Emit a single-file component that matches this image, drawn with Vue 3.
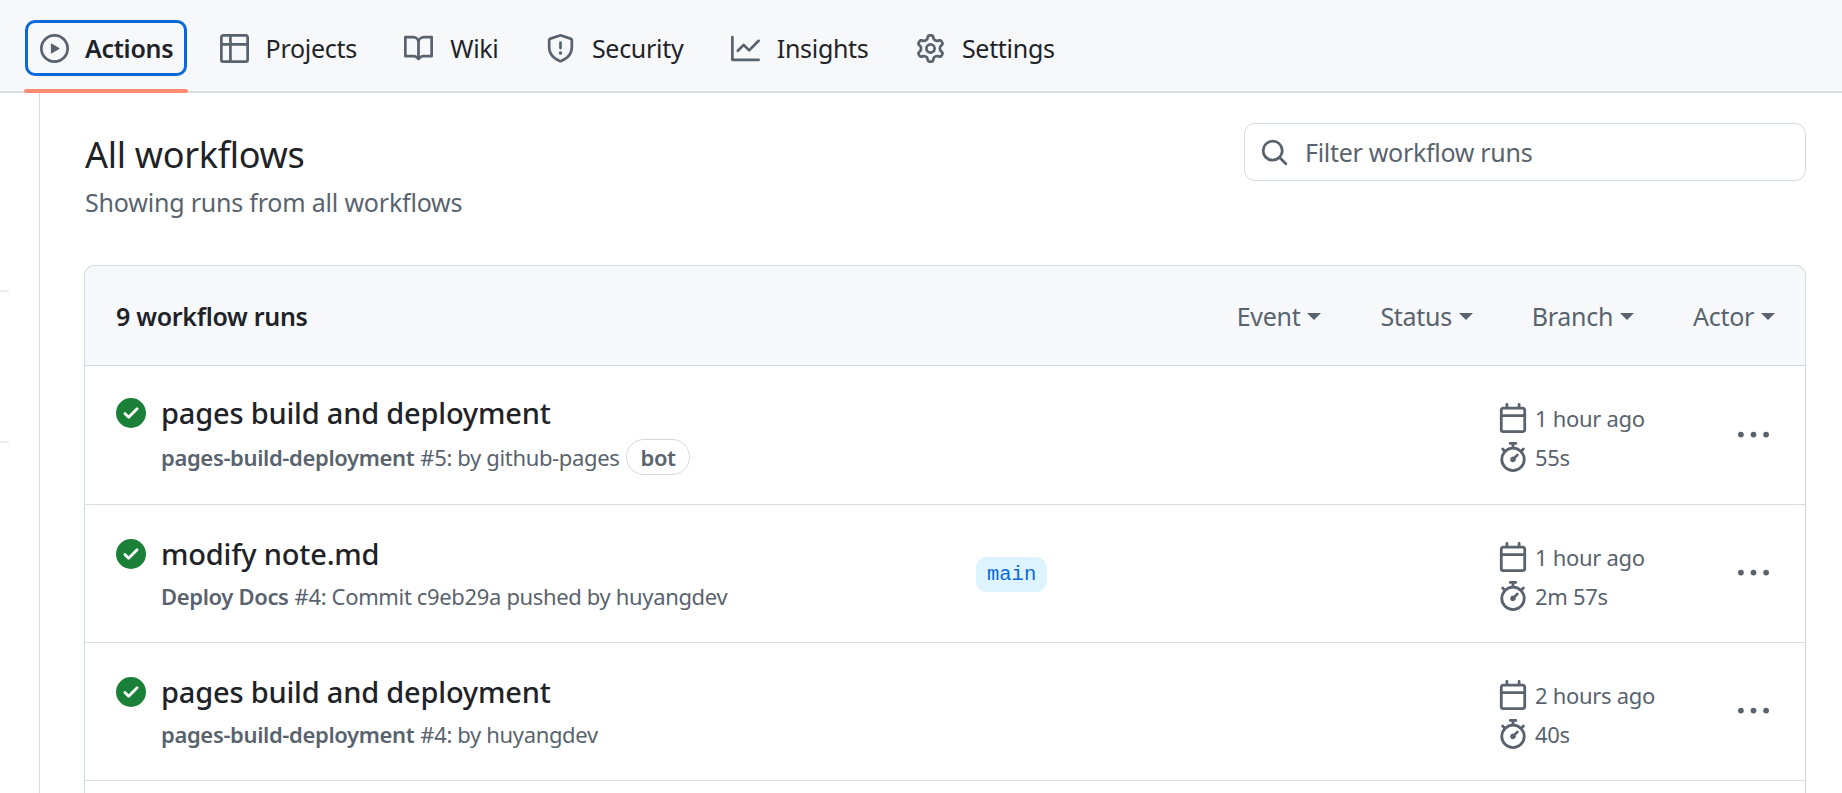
<template>
  <div class="page">
    <nav class="tabs">
      <a
        v-for="tab in tabs"
        :key="tab.label"
        :class="['tab', tab.active ? 'active' : '']"
      >
        <svg class="tab-icon" viewBox="0 0 16 16"><path :d="tab.icon" /></svg>
        <span>{{ tab.label }}</span>
      </a>
    </nav>

    <div class="layout">
      <aside class="sidebar">
        <div class="side-rule"></div>
        <div class="side-rule"></div>
      </aside>

      <main class="content">
        <div class="head">
          <div class="head-text">
            <h2>All workflows</h2>
            <p>Showing runs from all workflows</p>
          </div>
          <div class="filter">
            <svg viewBox="0 0 16 16"><path :d="icons.search" /></svg>
            <span>Filter workflow runs</span>
          </div>
        </div>

        <section class="box">
          <header class="box-header">
            <strong>9 workflow runs</strong>
            <div class="menus">
              <span v-for="menu in menus" :key="menu" class="menu">
                {{ menu }}<i class="caret"></i>
              </span>
            </div>
          </header>

          <div v-for="run in runs" :key="run.meta" class="run">
            <div class="run-left">
              <svg class="status" viewBox="0 0 16 16"><path :d="icons.check" /></svg>
              <div>
                <div class="run-title">{{ run.title }}</div>
                <div class="run-meta">
                  <b>{{ run.workflow }}</b>
                  <span>{{ run.meta }}</span>
                  <span v-if="run.bot" class="bot">bot</span>
                </div>
              </div>
            </div>
            <div class="run-branch">
              <span v-if="run.branch" class="branch">{{ run.branch }}</span>
            </div>
            <div class="run-times">
              <div class="time">
                <svg viewBox="0 0 16 16"><path :d="icons.calendar" /></svg>
                {{ run.when }}
              </div>
              <div class="time">
                <svg viewBox="0 0 16 16"><path :d="icons.stopwatch" /></svg>
                {{ run.took }}
              </div>
            </div>
            <svg class="kebab" viewBox="0 0 16 16"><path :d="icons.kebab" /></svg>
          </div>
          <div class="run empty"></div>
        </section>
      </main>
    </div>
  </div>
</template>

<script setup>
const icons = {
  search: 'M10.68 11.74a6 6 0 0 1-7.922-8.982 6 6 0 0 1 8.982 7.922l3.04 3.04a.749.749 0 0 1-.326 1.275.749.749 0 0 1-.734-.215ZM11.5 7a4.499 4.499 0 1 0-8.997 0A4.499 4.499 0 0 0 11.5 7Z',
  check: 'M8 16A8 8 0 1 1 8 0a8 8 0 0 1 0 16Zm3.78-9.72a.751.751 0 0 0-.018-1.042.751.751 0 0 0-1.042-.018L6.75 9.19 5.28 7.72a.751.751 0 0 0-1.042.018.751.751 0 0 0-.018 1.042l2 2a.75.75 0 0 0 1.06 0Z',
  calendar: 'M4.75 0a.75.75 0 0 1 .75.75V2h5V.75a.75.75 0 0 1 1.5 0V2h1.25c.966 0 1.75.784 1.75 1.75v10.5A1.75 1.75 0 0 1 13.25 16H2.75A1.75 1.75 0 0 1 1 14.25V3.75C1 2.784 1.784 2 2.75 2H4V.75A.75.75 0 0 1 4.75 0ZM2.5 7.5v6.75c0 .138.112.25.25.25h10.5a.25.25 0 0 0 .25-.25V7.5Zm10.75-4H2.75a.25.25 0 0 0-.25.25V6h11V3.75a.25.25 0 0 0-.25-.25Z',
  stopwatch: 'M5.75.75A.75.75 0 0 1 6.5 0h3a.75.75 0 0 1 0 1.5h-.75v1l-.001.041a6.724 6.724 0 0 1 3.464 1.435l.007-.006.75-.75a.75.75 0 1 1 1.06 1.06l-.75.75-.006.007a6.75 6.75 0 1 1-10.548 0L2.72 5.03l-.75-.75a.751.751 0 0 1 .018-1.042.751.751 0 0 1 1.042-.018l.75.75.007.006A6.72 6.72 0 0 1 7.25 2.541V1.5H6.5a.75.75 0 0 1-.75-.75ZM8 14.5a5.25 5.25 0 1 0-.001-10.501A5.25 5.25 0 0 0 8 14.5Zm.389-6.7 1.33-1.33a.75.75 0 1 1 1.061 1.06L9.45 8.861A1.503 1.503 0 0 1 8 10.75a1.499 1.499 0 1 1 .389-2.95Z',
  kebab: 'M8 9a1.5 1.5 0 1 0 0-3 1.5 1.5 0 0 0 0 3ZM1.5 9a1.5 1.5 0 1 0 0-3 1.5 1.5 0 0 0 0 3Zm13 0a1.5 1.5 0 1 0 0-3 1.5 1.5 0 0 0 0 3Z'
}

const tabs = [
  { label: 'Actions', active: true, icon: 'M8 0a8 8 0 1 1 0 16A8 8 0 0 1 8 0ZM1.5 8a6.5 6.5 0 1 0 13 0 6.5 6.5 0 0 0-13 0Zm4.879-2.773 4.264 2.559a.25.25 0 0 1 0 .428l-4.264 2.559A.25.25 0 0 1 6 10.559V5.442a.25.25 0 0 1 .379-.215Z' },
  { label: 'Projects', icon: 'M0 1.75C0 .784.784 0 1.75 0h12.5C15.216 0 16 .784 16 1.75v12.5A1.75 1.75 0 0 1 14.25 16H1.75A1.75 1.75 0 0 1 0 14.25ZM6.5 6.5v8h7.75a.25.25 0 0 0 .25-.25V6.5Zm8-1.5V1.75a.25.25 0 0 0-.25-.25H6.5V5Zm-13 1.5v7.75c0 .138.112.25.25.25H5v-8ZM5 5V1.5H1.75a.25.25 0 0 0-.25.25V5Z' },
  { label: 'Wiki', icon: 'M0 1.75A.75.75 0 0 1 .75 1h4.253c1.227 0 2.317.59 3 1.501A3.743 3.743 0 0 1 11.006 1h4.245a.75.75 0 0 1 .75.75v10.5a.75.75 0 0 1-.75.75h-4.507a2.25 2.25 0 0 0-1.591.659l-.622.621a.75.75 0 0 1-1.06 0l-.622-.621A2.25 2.25 0 0 0 5.258 13H.75a.75.75 0 0 1-.75-.75Zm7.251 10.324.004-5.073-.002-2.253A2.25 2.25 0 0 0 5.003 2.5H1.5v9h3.757a3.75 3.75 0 0 1 1.994.574ZM8.755 4.75l-.004 7.322a3.752 3.752 0 0 1 1.992-.572H14.5v-9h-3.495a2.25 2.25 0 0 0-2.25 2.25Z' },
  { label: 'Security', icon: 'M7.467.133a1.748 1.748 0 0 1 1.066 0l5.25 1.68A1.75 1.75 0 0 1 15 3.48V7c0 1.566-.32 3.182-1.303 4.682-.983 1.498-2.585 2.813-5.032 3.855a1.697 1.697 0 0 1-1.33 0c-2.447-1.042-4.049-2.357-5.032-3.855C1.32 10.182 1 8.566 1 7V3.48a1.75 1.75 0 0 1 1.217-1.667Zm.61 1.429a.25.25 0 0 0-.153 0l-5.25 1.68a.25.25 0 0 0-.174.238V7c0 1.358.275 2.666 1.057 3.86.784 1.194 2.121 2.34 4.366 3.297a.196.196 0 0 0 .154 0c2.245-.956 3.582-2.104 4.366-3.298C13.225 9.666 13.5 8.36 13.5 7V3.48a.25.25 0 0 0-.174-.237l-5.25-1.68ZM8.75 4.75v3a.75.75 0 0 1-1.5 0v-3a.75.75 0 0 1 1.5 0ZM9 10.5a1 1 0 1 1-2 0 1 1 0 0 1 2 0Z' },
  { label: 'Insights', icon: 'M1.5 1.75V13.5h13.75a.75.75 0 0 1 0 1.5H.75a.75.75 0 0 1-.75-.75V1.75a.75.75 0 0 1 1.5 0Zm14.28 2.53-5.25 5.25a.75.75 0 0 1-1.06 0L7 7.06 4.28 9.78a.751.751 0 0 1-1.042-.018.751.751 0 0 1-.018-1.042l3.25-3.25a.75.75 0 0 1 1.06 0L10 7.94l4.72-4.72a.751.751 0 0 1 1.042.018.751.751 0 0 1 .018 1.042Z' },
  { label: 'Settings', icon: 'M8 0a8.2 8.2 0 0 1 .701.031C9.444.095 9.99.645 10.16 1.29l.288 1.107c.018.066.079.158.212.224.231.114.454.243.668.386.123.082.233.09.299.071l1.103-.303c.644-.176 1.392.021 1.82.63.27.385.506.792.704 1.218.315.675.111 1.422-.364 1.891l-.814.806c-.049.048-.098.147-.088.294.016.257.016.515 0 .772-.01.147.038.246.088.294l.814.806c.475.469.679 1.216.364 1.891a7.977 7.977 0 0 1-.704 1.217c-.428.61-1.176.807-1.82.63l-1.102-.302c-.067-.019-.177-.011-.3.071a5.909 5.909 0 0 1-.668.386c-.133.066-.194.158-.211.224l-.29 1.106c-.168.646-.715 1.196-1.458 1.26a8.006 8.006 0 0 1-1.402 0c-.743-.064-1.289-.614-1.458-1.26l-.289-1.106c-.018-.066-.079-.158-.212-.224a5.738 5.738 0 0 1-.668-.386c-.123-.082-.233-.09-.299-.071l-1.103.303c-.644.176-1.392-.021-1.82-.63a8.12 8.12 0 0 1-.704-1.218c-.315-.675-.111-1.422.363-1.891l.815-.806c.05-.048.098-.147.088-.294a6.214 6.214 0 0 1 0-.772c.01-.147-.038-.246-.088-.294l-.815-.806C.635 6.045.431 5.298.746 4.623a7.92 7.92 0 0 1 .704-1.217c.428-.61 1.176-.807 1.82-.63l1.102.302c.067.019.177.011.3-.071.214-.143.437-.272.668-.386.133-.066.194-.158.211-.224l.29-1.106C6.009.645 6.556.095 7.299.03 7.53.01 7.764 0 8 0Zm-.571 1.525c-.036.003-.108.036-.137.146l-.289 1.105c-.147.561-.549.967-.998 1.189-.173.086-.34.183-.5.29-.417.278-.97.423-1.529.27l-1.103-.303c-.109-.03-.175.016-.195.045-.22.312-.412.644-.573.99-.014.031-.021.11.059.19l.815.806c.411.406.562.957.53 1.456a4.709 4.709 0 0 0 0 .582c.032.499-.119 1.05-.53 1.456l-.815.806c-.081.08-.073.159-.059.19.162.346.353.677.573.989.02.03.085.076.195.046l1.102-.303c.56-.153 1.113-.008 1.53.27.161.107.328.204.501.29.447.222.85.629.997 1.189l.289 1.105c.029.109.101.143.137.146a6.6 6.6 0 0 0 1.142 0c.036-.003.108-.036.137-.146l.289-1.105c.147-.561.549-.967.998-1.189.173-.086.34-.183.5-.29.417-.278.97-.423 1.529-.27l1.103.303c.109.029.175-.016.195-.045.22-.313.411-.644.573-.99.014-.031.021-.11-.059-.19l-.815-.806c-.411-.406-.562-.957-.53-1.456a4.709 4.709 0 0 0 0-.582c-.032-.499.119-1.05.53-1.456l.815-.806c.081-.08.073-.159.059-.19a6.464 6.464 0 0 0-.573-.989c-.02-.03-.085-.076-.195-.046l-1.102.303c-.56.153-1.113.008-1.53-.27a4.44 4.44 0 0 0-.501-.29c-.447-.222-.85-.629-.997-1.189l-.289-1.105c-.029-.11-.101-.143-.137-.146a6.6 6.6 0 0 0-1.142 0ZM11 8a3 3 0 1 1-6 0 3 3 0 0 1 6 0ZM9.5 8a1.5 1.5 0 1 0-3.001.001A1.5 1.5 0 0 0 9.5 8Z' }
]

const menus = ['Event', 'Status', 'Branch', 'Actor']

const runs = [
  { title: 'pages build and deployment', workflow: 'pages-build-deployment', meta: '#5: by github-pages', bot: true, when: '1 hour ago', took: '55s' },
  { title: 'modify note.md', workflow: 'Deploy Docs', meta: '#4: Commit c9eb29a pushed by huyangdev', branch: 'main', when: '1 hour ago', took: '2m 57s' },
  { title: 'pages build and deployment', workflow: 'pages-build-deployment', meta: '#4: by huyangdev', when: '2 hours ago', took: '40s' }
]
</script>

<style>
html, body {
  margin: 0;
  background: #fff;
  overflow: hidden;
}
</style>

<style scoped>
.page {
  height: 793px;
  overflow: hidden;
  display: flex;
  flex-direction: column;
  font-family: "Noto Sans", "Liberation Sans", sans-serif;
  color: #1f2328;
  letter-spacing: -0.3px;
}

svg {
  fill: currentColor;
  flex: none;
}

.tabs {
  flex: none;
  height: 71px;
  padding: 20px 0 0 25px;
  display: flex;
  gap: 18.4px;
  background: #f6f8fa;
  border-bottom: 2px solid #d8dee4;
}

.tab {
  position: relative;
  height: 56px;
  box-sizing: border-box;
  padding: 0 15px 0 14px;
  display: flex;
  align-items: center;
  gap: 17px;
  font-size: 25px;
}

.tab-icon {
  width: 29px;
  height: 29px;
  color: #59636e;
}

.tab.active {
  font-weight: 600;
  gap: 16px;
  border: 3px solid #0969da;
  border-radius: 10px;
  padding: 0 11px 0 12px;
}

.tab.active::after {
  content: "";
  position: absolute;
  left: -4px;
  right: -4px;
  bottom: -20px;
  height: 4px;
  border-radius: 2px;
  background: #fd8c73;
}

.layout {
  flex: 1;
  display: flex;
  min-height: 0;
}

.sidebar {
  width: 39px;
  flex: none;
  border-right: 1px solid #d8dee4;
  padding-top: 197px;
}

.side-rule {
  width: 9px;
  height: 2px;
  background: #eaeef2;
  margin-bottom: 149px;
}

.content {
  flex: 1;
  min-width: 0;
  padding: 30px 36px 0 44px;
  display: flex;
  flex-direction: column;
}

.head {
  display: flex;
  justify-content: space-between;
  align-items: flex-start;
  height: 142px;
  flex: none;
}

.head-text {
  padding: 7px 0 0 1px;
}

.head h2 {
  margin: 0;
  font-size: 36px;
  line-height: 50px;
  font-weight: 400;
}

.head p {
  margin: 6px 0 0;
  font-size: 25px;
  line-height: 32px;
  letter-spacing: -0.2px;
  color: #59636e;
}

.filter {
  width: 562px;
  height: 58px;
  box-sizing: border-box;
  border: 1px solid #d1d9e0;
  border-radius: 11px;
  display: flex;
  align-items: center;
  gap: 16px;
  padding-left: 15px;
  font-size: 25px;
  color: #59636e;
}

.filter svg {
  width: 29px;
  height: 29px;
}

.box {
  flex: 1;
  border: 1px solid #d1d9e0;
  border-bottom: none;
  border-radius: 11px 11px 0 0;
  overflow: hidden;
}

.box-header {
  height: 100px;
  box-sizing: border-box;
  background: #f6f8fa;
  border-bottom: 1px solid #d1d9e0;
  display: flex;
  justify-content: space-between;
  align-items: center;
  padding: 0 30px 0 31px;
  font-size: 25px;
}

.box-header strong {
  font-weight: 600;
}

.menus {
  display: flex;
  gap: 59px;
  color: #59636e;
}

.menu {
  display: flex;
  align-items: center;
}

.caret {
  margin-left: 7px;
  margin-top: 2px;
  border-top: 7px solid #59636e;
  border-left: 7px solid transparent;
  border-right: 7px solid transparent;
}

.run {
  height: 138px;
  box-sizing: border-box;
  border-bottom: 1px solid #d8dee4;
  display: flex;
  align-items: center;
  padding-left: 31px;
}

.box-header + .run {
  height: 139px;
}

.run.empty {
  border-bottom: none;
}

.run-left {
  width: 860px;
  flex: none;
  display: flex;
}

.status {
  width: 30px;
  height: 30px;
  color: #1a7f37;
  margin: 3px 15px 0 0;
}

.run-title {
  font-size: 29px;
  line-height: 36px;
  font-weight: 500;
  letter-spacing: -0.2px;
}

.run-meta {
  display: flex;
  align-items: center;
  gap: 6px;
  min-height: 32px;
  margin-top: 8px;
  font-size: 22px;
  line-height: 32px;
  letter-spacing: -0.35px;
  color: #59636e;
}

.run-meta b {
  font-weight: 600;
}

.bot {
  box-sizing: border-box;
  height: 36px;
  line-height: 34px;
  padding: 0 13px;
  margin-left: 1px;
  border: 1px solid #d1d9e0;
  border-radius: 18px;
  font-weight: 600;
}

.run-branch {
  width: 522px;
  flex: none;
  padding-top: 1px;
}

.branch {
  display: block;
  width: max-content;
  height: 35px;
  line-height: 35px;
  padding: 0 11px;
  border-radius: 11px;
  background: #ddf4ff;
  color: #0969da;
  font-family: "Liberation Mono", monospace;
  font-size: 20.5px;
  letter-spacing: 0;
}

.run-times {
  width: 240px;
  flex: none;
  padding-top: 5px;
}

.time {
  display: flex;
  align-items: center;
  gap: 7px;
  height: 39px;
  font-size: 22px;
  color: #59636e;
}

.time svg {
  width: 30px;
  height: 30px;
}

.kebab {
  width: 31px;
  height: 31px;
  color: #59636e;
}
</style>
